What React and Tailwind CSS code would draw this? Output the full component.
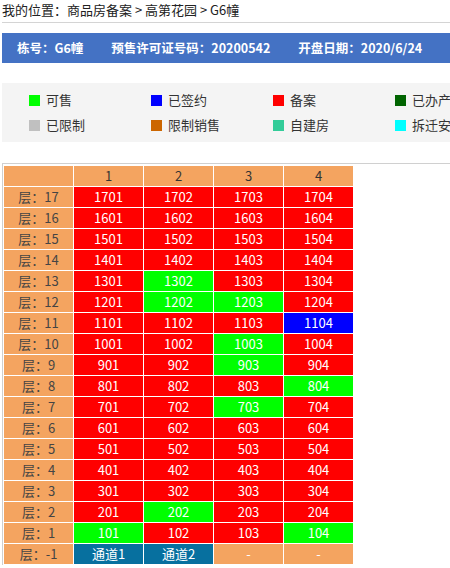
import React from "react";

const R = "r", G = "g", B = "b";

// status per floor, columns 1..4
const floors = [
  [17, [R, R, R, R]],
  [16, [R, R, R, R]],
  [15, [R, R, R, R]],
  [14, [R, R, R, R]],
  [13, [R, G, R, R]],
  [12, [R, G, G, R]],
  [11, [R, R, R, B]],
  [10, [R, R, G, R]],
  [9, [R, R, G, R]],
  [8, [R, R, R, G]],
  [7, [R, R, G, R]],
  [6, [R, R, R, R]],
  [5, [R, R, R, R]],
  [4, [R, R, R, R]],
  [3, [R, R, R, R]],
  [2, [R, G, R, R]],
  [1, [G, R, R, G]],
];

const cellBg = {
  r: "bg-[#ff0000] text-white",
  g: "bg-[#00ff00] text-white",
  b: "bg-[#0000ff] text-white",
};

const legend = [
  ["可售", "bg-[#00ff00]"],
  ["已签约", "bg-[#0000ff]"],
  ["备案", "bg-[#ff0000]"],
  ["已办产权", "bg-[#006400]"],
  ["已限制", "bg-[#c0c0c0]"],
  ["限制销售", "bg-[#cc6600]"],
  ["自建房", "bg-[#33cc99]"],
  ["拆迁安置", "bg-[#00ffff]"],
];

export default function App() {
  const font = { fontFamily: '"Noto Sans CJK SC", "Liberation Sans", sans-serif' };
  return (
    <div className="w-[450px] h-[568px] overflow-hidden bg-white" style={font}>
      <div className="w-[620px] pl-[2px]">
        {/* breadcrumb */}
        <div className="h-[23px] text-[13px] leading-[20px] text-[#222] border-b border-[#d4d4d4] whitespace-nowrap">
          我的位置：商品房备案 &gt; 高第花园 &gt; G6幢
        </div>

        {/* info bar */}
        <div className="mt-[10px] h-[30px] bg-[#4472c4] flex items-center gap-[28px] pl-[15px] text-white font-bold text-[12.5px] whitespace-nowrap">
          <span>栋号：G6幢</span>
          <span>预售许可证号码：20200542</span>
          <span>开盘日期：2020/6/24</span>
          <span>销售状态：在售</span>
        </div>

        {/* legend */}
        <div className="mt-[20px] h-[59px] bg-[#f4f4f4] pl-[27px] pt-[10px] grid grid-cols-[122px_122px_122px_122px] auto-rows-[25px] text-[13px] text-[#333]">
          {legend.map(([label, bg]) => (
            <div key={label} className="flex items-center gap-[6px] h-[14px] whitespace-nowrap">
              <span className={`w-[11px] h-[11px] ${bg}`} />
              <span className="leading-[14px]">{label}</span>
            </div>
          ))}
        </div>

        {/* building table */}
        <div className="mt-[21px] border-t border-l border-[#d0d0d0] pt-[1px]">
          <table className="table-fixed border-separate border-spacing-[1px] text-[13px] text-center">
            <tbody>
              <tr className="h-[20px]">
                <td className="w-[69px] bg-[#f4a460] p-0 leading-[20px]" />
                {[1, 2, 3, 4].map((n) => (
                  <td key={n} className="w-[69px] bg-[#f4a460] text-[#333] p-0 leading-[20px]">
                    {n}
                  </td>
                ))}
              </tr>
              {floors.map(([f, cols]) => (
                <tr key={f} className="h-[20px]">
                  <td className="bg-[#f4a460] text-[#444] p-0 leading-[20px]">层：{f}</td>
                  {cols.map((s, i) => (
                    <td key={i} className={`${cellBg[s]} p-0 leading-[20px]`}>
                      {f * 100 + i + 1}
                    </td>
                  ))}
                </tr>
              ))}
              <tr className="h-[20px]">
                <td className="bg-[#f4a460] text-[#444] p-0 leading-[20px]">层：-1</td>
                <td className="bg-[#07709f] text-white p-0 leading-[20px]">通道1</td>
                <td className="bg-[#07709f] text-white p-0 leading-[20px]">通道2</td>
                <td className="bg-[#f4a460] text-white p-0 leading-[20px]">-</td>
                <td className="bg-[#f4a460] text-white p-0 leading-[20px]">-</td>
              </tr>
            </tbody>
          </table>
        </div>
      </div>
    </div>
  );
}
